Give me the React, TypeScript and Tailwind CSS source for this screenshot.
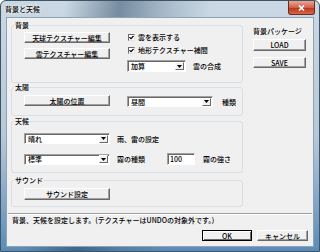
import React from "react";

type Kids = { children?: React.ReactNode; className?: string };

function Btn({ children, className = "" }: Kids) {
  return (
    <button
      type="button"
      className={`flex items-center justify-center bg-[#f0f0f0] border border-t-white border-l-white border-r-[#696969] border-b-[#696969] shadow-[inset_-1px_-1px_0_#a0a0a0] text-black ${className}`}
    >
      {children}
    </button>
  );
}

function Select({ value, className = "" }: { value: string; className?: string }) {
  return (
    <div
      className={`flex items-center bg-white border border-t-[#a0a0a0] border-l-[#a0a0a0] border-r-white border-b-white shadow-[inset_1px_1px_0_#696969] pl-[3px] pr-[1px] ${className}`}
    >
      <span className="flex-1">{value}</span>
      <span className="flex h-[8px] w-[9px] items-center justify-center bg-[#f0f0f0] border border-t-white border-l-white border-r-[#696969] border-b-[#696969]">
        <svg width="5" height="3" viewBox="0 0 5 3">
          <path d="M0 0h5L2.5 3z" fill="#000" />
        </svg>
      </span>
    </div>
  );
}

function Check({ label }: { label: string }) {
  return (
    <div className="flex h-[10px] items-center">
      <span className="ml-[1px] flex h-[7px] w-[7px] items-center justify-center bg-white border border-t-[#696969] border-l-[#696969] border-r-[#e3e3e3] border-b-[#e3e3e3]">
        <svg width="5" height="5" viewBox="0 0 5 5">
          <path d="M0.5 2.2L2 3.7L4.5 1" fill="none" stroke="#000" strokeWidth="1.2" />
        </svg>
      </span>
      <span className="ml-[3px]">{label}</span>
    </div>
  );
}

function Group({ title, children, className = "" }: Kids & { title: string }) {
  return (
    <div className={`relative rounded-[3px] border border-[#d5dfe5] ${className}`}>
      <span className="absolute -top-[5px] left-[2px] bg-[#f0f0f0] px-[1px] leading-[8px]">
        {title}
      </span>
      {children}
    </div>
  );
}

export default function App() {
  return (
    <div className="relative h-[252px] w-[320px] overflow-hidden rounded-t-[6px] border border-[#3f5366] bg-[linear-gradient(100deg,transparent_18%,rgba(35,65,95,0.5)_33%,rgba(60,90,120,0.25)_45%,transparent_58%),linear-gradient(180deg,#cad8e3_0%,#b6c8d7_55%,#5a8bb8_100%)] font-['Noto_Sans_CJK_JP',sans-serif] text-[7px] font-medium leading-[8px] text-black">
      <div className="flex h-[16px] items-start justify-between">
        <span className="mt-[4px] ml-[4px] text-[7px] leading-[8px] text-black [text-shadow:0_0_3px_#fff,0_0_2px_#fff]">
          背景と天候
        </span>
        <div className="mr-[4px] flex h-[14px] w-[27px] items-center justify-center rounded-b-[3px] border border-t-0 border-[#6b2b1d] bg-[linear-gradient(#e9a796,#d0614a_50%,#b8321a_51%,#d8664a)]">
          <svg width="7" height="6" viewBox="0 0 7 6">
            <path d="M1 0.5L6 5.5M6 0.5L1 5.5" stroke="#fff" strokeWidth="1.6" />
          </svg>
        </div>
      </div>

      <div className="mx-[5px] flex h-[230px] flex-col border border-[#8ea3b6] bg-[#f0f0f0]">
        <div className="flex pl-[4px]">
          <div className="flex w-[232px] flex-col">
            <Group title="背景" className="mt-[7px] h-[58px]">
              <div className="flex items-start pl-[12px] pt-[6px]">
                <div className="flex flex-col">
                  <Btn className="h-[11px] w-[86px]">天球テクスチャー編集</Btn>
                  <Btn className="mt-[5px] h-[11px] w-[86px]">雲テクスチャー編集</Btn>
                </div>
                <div className="ml-[17px] flex flex-col">
                  <Check label="雲を表示する" />
                  <div className="mt-[3px]">
                    <Check label="地形テクスチャー補間" />
                  </div>
                  <div className="mt-[5px] flex items-center">
                    <Select value="加算" className="h-[12px] w-[59px]" />
                    <span className="ml-[7px]">雲の合成</span>
                  </div>
                </div>
              </div>
            </Group>

            <Group title="太陽" className="mt-[4px] h-[29px]">
              <div className="flex items-start pl-[12px] pt-[7px]">
                <Btn className="h-[11px] w-[86px]">太陽の位置</Btn>
                <div className="ml-[17px] mt-[1px] flex items-center">
                  <Select value="昼間" className="h-[11px] w-[86px]" />
                  <span className="ml-[9px]">種類</span>
                </div>
              </div>
            </Group>

            <Group title="天候" className="mt-[5px] h-[52px]">
              <div className="flex flex-col pl-[12px] pt-[11px]">
                <div className="flex items-center">
                  <Select value="晴れ" className="h-[11px] w-[86px]" />
                  <span className="ml-[7px]">雨、雷の設定</span>
                </div>
                <div className="mt-[9px] flex items-center">
                  <Select value="標準" className="h-[11px] w-[86px]" />
                  <span className="ml-[7px] w-[50px]">霧の種類</span>
                  <div className="flex h-[12px] w-[28px] items-center bg-white border border-t-[#a0a0a0] border-l-[#a0a0a0] border-r-white border-b-white shadow-[inset_1px_1px_0_#696969] pl-[2px]">
                    100
                  </div>
                  <span className="ml-[8px]">霧の強さ</span>
                </div>
              </div>
            </Group>

            <Group title="サウンド" className="mt-[7px] h-[27px]">
              <div className="flex pl-[12px] pt-[7px]">
                <Btn className="h-[12px] w-[86px]">サウンド設定</Btn>
              </div>
            </Group>
          </div>

          <div className="ml-[10px] mt-[9px] flex w-[53px] flex-col">
            <span>背景パッケージ</span>
            <Btn className="mt-[4px] h-[12px] w-[53px]">LOAD</Btn>
            <Btn className="mt-[6px] h-[11px] w-[53px]">SAVE</Btn>
          </div>
        </div>

        <div className="mx-[1px] mt-[6px] h-[2px] border-t border-b border-t-[#a0a0a0] border-b-white" />

        <div className="mt-[1px] pl-[5px]">
          背景、天候を設定します。(テクスチャーはUNDOの対象外です。)
        </div>

        <div className="mt-[6px] flex justify-end gap-[5px] pr-[5px]">
          <button
            type="button"
            className="flex h-[11px] w-[50px] items-center justify-center border border-black bg-[#f0f0f0] shadow-[inset_1px_1px_0_#fff,inset_-1px_-1px_0_#696969]"
          >
            OK
          </button>
          <Btn className="h-[11px] w-[51px]">キャンセル</Btn>
        </div>
      </div>
    </div>
  );
}
